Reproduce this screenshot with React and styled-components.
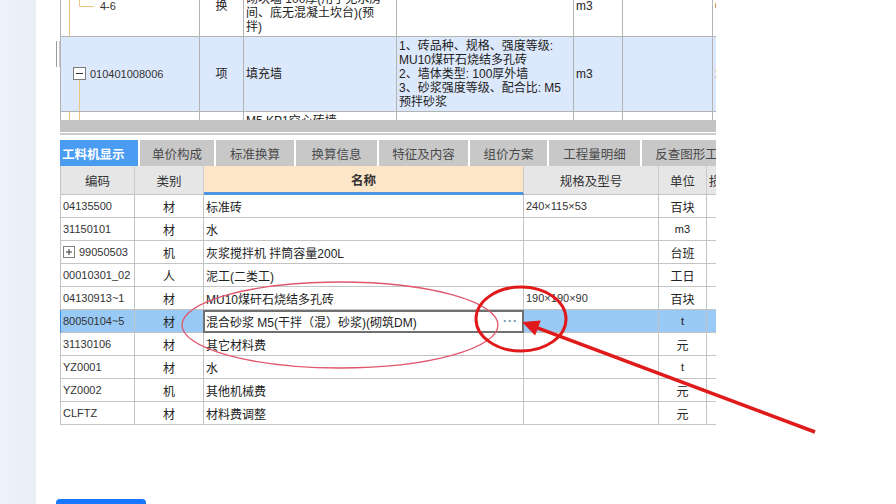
import styled, { createGlobalStyle } from "styled-components";

const GlobalStyle = createGlobalStyle`
  html, body {
    margin: 0;
    padding: 0;
  }
  body {
    width: 896px;
    height: 504px;
    overflow: hidden;
    background: #fff;
    color: #222;
    font-family: "Liberation Sans", "Noto Sans CJK SC", sans-serif;
    font-size: 12px;
  }
`;

const Page = styled.div`
  position: relative;
  display: flex;
  height: 504px;
  overflow: hidden;
`;

const Sidebar = styled.aside`
  width: 36px;
  flex-shrink: 0;
  background: linear-gradient(to right, #eef3fb, #e8edf6);
`;

const Main = styled.main`
  flex: 1;
  padding-left: 20px;
  background: #fff;
`;

const ShotRow = styled.div`
  display: flex;
`;

const Grip = styled.div`
  width: 4px;
  height: 26px;
  margin-top: 41px;
  box-sizing: border-box;
  border-left: 1px solid #9c9c9c;
  border-right: 1px solid #c9c9c9;
`;

const Shot = styled.div`
  width: 656px;
  display: flex;
  flex-direction: column;
  overflow: hidden;
`;

/* ---------- upper grid (bill items) ---------- */

const UpperPane = styled.div`
  height: 120px;
  display: flex;
  flex-direction: column;
  justify-content: flex-end;
  overflow: hidden;
`;

const UpperRow = styled.div`
  flex-shrink: 0;
  display: grid;
  grid-template-columns: 139px 44px 153px 177px 49px 90px 60px;
  height: ${(p) => p.$h}px;
  box-sizing: border-box;
  background: ${(p) => (p.$active ? "#dce8fb" : "#fff")};
  border-left: 1px solid #b3b3b3;
  border-bottom: ${(p) => (p.$clipped ? "none" : "1px solid #b3b3b3")};
  overflow: hidden;
`;

const UCell = styled.div`
  display: flex;
  align-items: ${(p) => (p.$top ? "flex-start" : "center")};
  justify-content: ${(p) => (p.$center ? "center" : "flex-start")};
  gap: 2px;
  padding: ${(p) => (p.$tree ? "0" : p.$top ? "2px 2px 0" : "0 2px")};
  border-right: 1px solid #b3b3b3;
  line-height: 14px;
  white-space: nowrap;
  overflow: hidden;
`;

const CodeText = styled.span`
  font-size: 11px;
  color: #333;
`;

const HScroll = styled.div`
  flex-shrink: 0;
  height: 12px;
  background: #c4c4c4;
  border-bottom: 1px solid #fff;
`;

const Rule = styled.div`
  flex-shrink: 0;
  height: 2px;
  background: #cdcdcd;
  margin-bottom: 5px;
`;

/* ---------- tabs ---------- */

const TabBar = styled.div`
  display: flex;
  gap: 2px;
  height: 26px;
  flex-shrink: 0;
`;

const Tab = styled.div`
  flex-shrink: 0;
  width: ${(p) => p.$w}px;
  display: flex;
  align-items: center;
  justify-content: ${(p) => (p.$active ? "flex-start" : "center")};
  padding-left: ${(p) => (p.$active ? "2px" : "0")};
  box-sizing: border-box;
  background: ${(p) => (p.$active ? "#4a9cf3" : "#c8c8c8")};
  color: ${(p) => (p.$active ? "#fff" : "#4a4a4a")};
  font-weight: ${(p) => (p.$active ? 700 : 400)};
  font-size: 12.5px;
  white-space: nowrap;
`;

/* ---------- lower grid (labour / material / machine) ---------- */

const cols = "74px 69px 320px 135px 48px 60px";

const HeadRow = styled.div`
  display: grid;
  grid-template-columns: ${cols};
  height: 29px;
  flex-shrink: 0;
  border-left: 1px solid #c4c4c4;
`;

const HeadCell = styled.div`
  display: flex;
  align-items: center;
  justify-content: ${(p) => (p.$left ? "flex-start" : "center")};
  padding-left: ${(p) => (p.$left ? "2px" : "0")};
  box-sizing: border-box;
  background: ${(p) => (p.$sorted ? "#fde5c8" : "#e6e6e6")};
  border-right: 1px solid #cbcbcb;
  border-bottom: ${(p) => (p.$sorted ? "3px solid #4d94e4" : "1px solid #c4c4c4")};
  font-weight: ${(p) => (p.$sorted ? 700 : 400)};
  font-size: 12.5px;
  color: #333;
  white-space: nowrap;
  overflow: hidden;
`;

const Row = styled.div`
  display: grid;
  grid-template-columns: ${cols};
  height: 23px;
  flex-shrink: 0;
  border-left: 1px solid ${(p) => (p.$selected ? "#3f8de4" : "#c4c4c4")};
`;

const Cell = styled.div`
  display: flex;
  align-items: center;
  justify-content: ${(p) => (p.$center ? "center" : "flex-start")};
  gap: 4px;
  padding: 0 2px;
  box-sizing: border-box;
  background: ${(p) => (p.$selected ? "#99c9f5" : "transparent")};
  border-right: 1px solid #c4c4c4;
  border-bottom: 1px solid #c4c4c4;
  white-space: nowrap;
  overflow: hidden;
`;

const Editor = styled.div`
  display: flex;
  align-items: center;
  justify-content: space-between;
  padding: 0 4px 0 1px;
  margin-left: -1px;
  box-sizing: border-box;
  background: #fff;
  border: 2px solid #707070;
  white-space: nowrap;
  overflow: hidden;
`;

const Ellipsis = styled.span`
  color: #6d93ab;
  font-weight: 700;
  letter-spacing: 1px;
  margin-top: -2px;
`;

const Unit = styled.span`
  font-size: ${(p) => (p.$latin ? "11px" : "12px")};
`;

const Button = styled.button`
  display: block;
  width: 90px;
  height: 32px;
  margin-top: 74px;
  border: none;
  border-radius: 4px;
  background: #1677ff;
  color: #fff;
  font-family: inherit;
  font-size: 14px;
`;

const Overlay = styled.svg`
  position: absolute;
  top: 0;
  left: 0;
  pointer-events: none;
`;

const TREE = "#f0c584";

const tabs = [
  { label: "工料机显示", w: 78, active: true },
  { label: "单价构成", w: 74 },
  { label: "标准换算", w: 78 },
  { label: "换算信息", w: 81 },
  { label: "特征及内容", w: 89 },
  { label: "组价方案", w: 77 },
  { label: "工程量明细", w: 91 },
  { label: "反查图形工程量", w: 114 },
];

const items = [
  { code: "04135500", kind: "材", name: "标准砖", spec: "240×115×53", unit: "百块" },
  { code: "31150101", kind: "材", name: "水", spec: "", unit: "m3", latin: true },
  { code: "99050503", kind: "机", name: "灰浆搅拌机 拌筒容量200L", spec: "", unit: "台班", expand: true },
  { code: "00010301_02", kind: "人", name: "泥工(二类工)", spec: "", unit: "工日" },
  { code: "04130913~1", kind: "材", name: "MU10煤矸石烧结多孔砖", spec: "190×190×90", unit: "百块" },
  { code: "80050104~5", kind: "材", name: "混合砂浆 M5(干拌（混）砂浆)(砌筑DM)", spec: "", unit: "t", latin: true, selected: true },
  { code: "31130106", kind: "材", name: "其它材料费", spec: "", unit: "元" },
  { code: "YZ0001", kind: "材", name: "水", spec: "", unit: "t", latin: true },
  { code: "YZ0002", kind: "机", name: "其他机械费", spec: "", unit: "元" },
  { code: "CLFTZ", kind: "材", name: "材料费调整", spec: "", unit: "元" },
];

function PlusBox() {
  return (
    <svg width="12" height="12" viewBox="0 0 12 12">
      <rect x="0.5" y="0.5" width="11" height="11" fill="#fff" stroke="#808080" />
      <path d="M3 6h6M6 3v6" stroke="#333" strokeWidth="1" />
    </svg>
  );
}

function UpperGrid() {
  return (
    <UpperPane>
      <UpperRow $h={61}>
        <UCell $tree>
          <svg width="37" height="60">
            <path d="M8.5 0v60M18.5 0v30.5H33" stroke={TREE} fill="none" />
          </svg>
          <CodeText>4-6</CodeText>
        </UCell>
        <UCell $center>换</UCell>
        <UCell>
          <span>
            M5 KP1多孔砖墙
            <br />
            砌块墙 100厚(用于无水房
            <br />
            间、底无混凝土坎台)(预
            <br />
            拌)
          </span>
        </UCell>
        <UCell />
        <UCell>m3</UCell>
        <UCell />
        <UCell>0.81</UCell>
      </UpperRow>

      <UpperRow $h={75} $active>
        <UCell $tree>
          <svg width="27" height="74">
            <rect x="12.5" y="30.5" width="12" height="12" fill="#fff" stroke="#7a7a7a" />
            <path d="M15 36.5h7" stroke="#333" />
            <path d="M18.5 43v31" stroke={TREE} />
          </svg>
          <CodeText>010401008006</CodeText>
        </UCell>
        <UCell $center>项</UCell>
        <UCell>填充墙</UCell>
        <UCell>
          <span>
            1、砖品种、规格、强度等级:
            <br />
            MU10煤矸石烧结多孔砖
            <br />
            2、墙体类型: 100厚外墙
            <br />
            3、砂浆强度等级、配合比: M5
            <br />
            预拌砂浆
          </span>
        </UCell>
        <UCell>m3</UCell>
        <UCell />
        <UCell>2.64</UCell>
      </UpperRow>

      <UpperRow $h={8} $clipped>
        <UCell $tree>
          <svg width="27" height="8">
            <path d="M8.5 0v8M18.5 0v8" stroke={TREE} />
          </svg>
        </UCell>
        <UCell />
        <UCell $top>M5 KP1空心砖墙</UCell>
        <UCell />
        <UCell />
        <UCell />
        <UCell />
      </UpperRow>
    </UpperPane>
  );
}

function LowerGrid() {
  return (
    <>
      <HeadRow>
        <HeadCell>编码</HeadCell>
        <HeadCell>类别</HeadCell>
        <HeadCell $sorted>名称</HeadCell>
        <HeadCell>规格及型号</HeadCell>
        <HeadCell>单位</HeadCell>
        <HeadCell $left>损耗率</HeadCell>
      </HeadRow>

      {items.map((it) => (
        <Row key={it.code} $selected={it.selected}>
          <Cell $selected={it.selected}>
            {it.expand && <PlusBox />}
            <CodeText>{it.code}</CodeText>
          </Cell>
          <Cell $center $selected={it.selected}>
            {it.kind}
          </Cell>
          {it.selected ? (
            <Editor>
              <span>{it.name}</span>
              <Ellipsis>···</Ellipsis>
            </Editor>
          ) : (
            <Cell>{it.name}</Cell>
          )}
          <Cell $selected={it.selected}>
            <CodeText>{it.spec}</CodeText>
          </Cell>
          <Cell $center $selected={it.selected}>
            <Unit $latin={it.latin}>{it.unit}</Unit>
          </Cell>
          <Cell $selected={it.selected} />
        </Row>
      ))}
    </>
  );
}

function Annotations() {
  // arrow from lower right to the "..." button
  const tip = [522, 322];
  const tail = [815, 432];
  const dx = tail[0] - tip[0];
  const dy = tail[1] - tip[1];
  const len = Math.hypot(dx, dy);
  const ux = dx / len;
  const uy = dy / len;
  const headLen = 17;
  const half = 8;
  const bx = tip[0] + ux * headLen;
  const by = tip[1] + uy * headLen;
  const head = `${tip[0]},${tip[1]} ${bx - uy * half},${by + ux * half} ${bx + uy * half},${by - ux * half}`;

  return (
    <Overlay width="896" height="504" viewBox="0 0 896 504">
      <ellipse cx="340" cy="325" rx="158" ry="43" fill="none" stroke="#e0566a" strokeWidth="1.3" />
      <ellipse cx="521" cy="319" rx="45" ry="32" fill="none" stroke="#e01a1a" strokeWidth="3" />
      <line x1={tail[0]} y1={tail[1]} x2={bx - ux * 2} y2={by - uy * 2} stroke="#e01a1a" strokeWidth="3.5" />
      <polygon points={head} fill="#e01a1a" />
    </Overlay>
  );
}

export default function App() {
  return (
    <>
      <GlobalStyle />
      <Page>
        <Sidebar />
        <Main>
          <ShotRow>
            <Grip />
            <Shot>
              <UpperGrid />
              <HScroll />
              <Rule />
              <TabBar>
                {tabs.map((t) => (
                  <Tab key={t.label} $w={t.w} $active={t.active}>
                    {t.label}
                  </Tab>
                ))}
              </TabBar>
              <LowerGrid />
            </Shot>
          </ShotRow>
          <Button>确定</Button>
        </Main>
        <Annotations />
      </Page>
    </>
  );
}
